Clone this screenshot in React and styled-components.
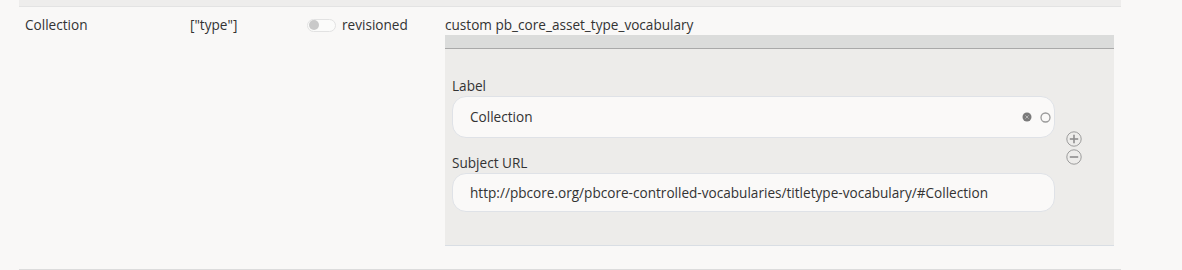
import React from 'react';
import styled, { createGlobalStyle } from 'styled-components';

const GlobalStyle = createGlobalStyle`
  body {
    margin: 0;
    background: #f9f8f7;
  }
`;

const Page = styled.div`
  height: 270px;
  box-sizing: border-box;
  padding: 0 61px 0 19px;
  background: #f9f8f7;
  font-family: "Open Sans", "Noto Sans", sans-serif;
  font-size: 13.6px;
  line-height: 18px;
  color: #333;
`;

const PrevRow = styled.div`
  height: 6px;
  background: #eeedec;
  border-bottom: 1px solid #e3e3e3;
`;

const Row = styled.div`
  display: grid;
  grid-template-columns: 165px 118px 137px 669px;
  padding: 9px 0 23px 6px;
  border-bottom: 1px solid #dcdcdc;
`;

const Cell = styled.div`
  display: flex;
  align-items: flex-start;
`;

const ToggleWrap = styled.label`
  display: flex;
  align-items: center;
  gap: 6px;
  height: 18px;
`;

const Track = styled.span`
  position: relative;
  width: 27px;
  height: 11px;
  border: 1px solid #e2e2e2;
  border-radius: 7px;
  background: #fbfbfa;
  margin-left: -1px;
`;

const Knob = styled.span`
  position: absolute;
  left: 1px;
  top: 0.5px;
  width: 10px;
  height: 10px;
  border-radius: 50%;
  background: #c9c9c9;
`;

const ValueCol = styled.div`
  display: flex;
  flex-direction: column;
`;

const Caption = styled.div`
  margin-bottom: 1px;
`;

const Panel = styled.div`
  background: #edecea;
  border-bottom: 1px solid #d9dee4;
`;

const PanelHead = styled.div`
  height: 13px;
  background: #dbdcdb;
  border-bottom: 1px solid #a9a9a9;
`;

const PanelBody = styled.div`
  display: flex;
  align-items: center;
  gap: 11px;
  padding: 28px 0 33px 7px;
`;

const Fields = styled.div`
  display: flex;
  flex-direction: column;
  width: 603px;
`;

const FieldLabel = styled.div`
  margin-bottom: 1px;
  margin-top: ${p => (p.$first ? '0' : '16px')};
`;

const InputBox = styled.div`
  display: flex;
  align-items: center;
  box-sizing: border-box;
  height: ${p => p.$h}px;
  padding: 0 3px 0 17px;
  background: #faf9f8;
  border: 1px solid #dfe2e7;
  border-radius: 14px;
`;

const InputText = styled.span`
  flex: 1;
  white-space: nowrap;
`;

const InputIcons = styled.span`
  display: flex;
  align-items: center;
  gap: 8px;
`;

const Controls = styled.div`
  display: flex;
  flex-direction: column;
  gap: 2px;
  padding-top: 6px;
`;

const ClearIcon = () => (
  <svg width="10" height="10" viewBox="0 0 10 10">
    <circle cx="5" cy="5" r="4.5" fill="#7a7a7a" />
    <path d="M3.4 3.4 L6.6 6.6 M6.6 3.4 L3.4 6.6" stroke="#b5b5b5" strokeWidth="1" />
  </svg>
);

const RingIcon = () => (
  <svg width="11" height="11" viewBox="0 0 11 11">
    <circle cx="5.5" cy="5.5" r="4.5" fill="none" stroke="#9a9a9a" strokeWidth="1.3" />
  </svg>
);

const CircleBtn = ({ plus }) => (
  <svg width="16" height="16" viewBox="0 0 16 16">
    <circle cx="8" cy="8" r="7.2" fill="none" stroke="#9c9c9c" strokeWidth="1" />
    <path d="M3.8 8 H12.2" stroke="#8e8e8e" strokeWidth="1.6" />
    {plus && <path d="M8 3.8 V12.2" stroke="#8e8e8e" strokeWidth="1.6" />}
  </svg>
);

export default function App() {
  return (
    <Page>
      <GlobalStyle />
      <PrevRow />
      <Row>
        <Cell>Collection</Cell>
        <Cell>["type"]</Cell>
        <Cell>
          <ToggleWrap>
            <Track>
              <Knob />
            </Track>
            revisioned
          </ToggleWrap>
        </Cell>
        <ValueCol>
          <Caption>custom pb_core_asset_type_vocabulary</Caption>
          <Panel>
            <PanelHead />
            <PanelBody>
              <Fields>
                <FieldLabel $first>Label</FieldLabel>
                <InputBox $h={42}>
                  <InputText>Collection</InputText>
                  <InputIcons>
                    <ClearIcon />
                    <RingIcon />
                  </InputIcons>
                </InputBox>
                <FieldLabel>Subject URL</FieldLabel>
                <InputBox $h={39}>
                  <InputText>http://pbcore.org/pbcore-controlled-vocabularies/titletype-vocabulary/#Collection</InputText>
                </InputBox>
              </Fields>
              <Controls>
                <CircleBtn plus />
                <CircleBtn />
              </Controls>
            </PanelBody>
          </Panel>
        </ValueCol>
      </Row>
    </Page>
  );
}
